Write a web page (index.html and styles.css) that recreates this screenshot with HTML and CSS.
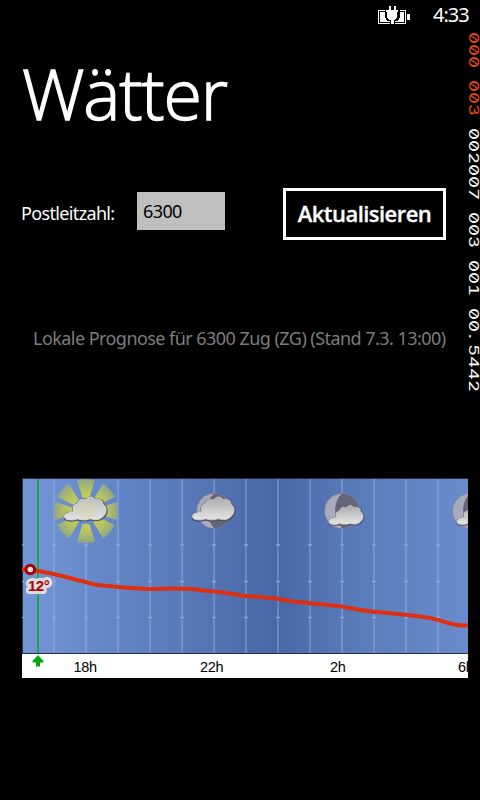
FILE: index.html
```html
<!DOCTYPE html>
<html lang="de">
<head>
<meta charset="utf-8">
<title>Wätter</title>
<link rel="stylesheet" href="styles.css">
</head>
<body>
<div class="phone">
  <header class="status">
    <svg class="battery" width="34" height="20" viewBox="0 0 34 20" shape-rendering="crispEdges">
      <path fill="#fff" d="M0 4H28V18H0z"/>
      <path fill="none" stroke="#000" d="M1.500 16.500V5.500H26.500V16.500z"/>
      <path fill="#fff" d="M29 8h3v6h-3z"/>
      <path fill="#000" d="M7 4h15v7l-2 4h-3v3h-5v-3H9l-2-4z"/>
      <path fill="#fff" d="M11 0h2v4h3V0h2v4h2v2h-1v5l-2 3h-1v4h-3v-4h-2l-2-3V6H8V4h3z"/>
    </svg>
    <span class="clock">4:33</span>
  </header>
  <svg class="counters" width="14" height="370" viewBox="466 30 14 370">
    <g transform="translate(469.300 32) rotate(90) scale(1.4 1)">
      <text class="hot" x="0 8.571 17.143 25.714 34.286 42.857 51.429">000 003</text>
      <text x="68.571 77.143 85.714 94.286 102.857 111.429 120 128.571 137.143 145.714 154.286 162.857 171.429 180 188.571 197.143 205.714 215.500 222.857 231.429 240 248.571">002007 003 001 00.5442</text>
    </g>
  </svg>
  <main>
    <h1>Wätter</h1>
    <form class="search">
      <label for="plz">Postleitzahl:</label>
      <input id="plz" type="text" value="6300">
      <button type="button">Aktualisieren</button>
    </form>
    <p class="caption">Lokale Prognose für 6300 Zug (ZG) (Stand 7.3. 13:00)</p>
    <svg class="chart" width="446" height="200" viewBox="22 478 446 200">
      <defs>
        <linearGradient id="sky" x1="22" x2="468" y1="0" y2="0" gradientUnits="userSpaceOnUse">
          <stop offset="0" stop-color="#7596d6"/><stop offset=".25" stop-color="#6182c2"/>
          <stop offset=".57" stop-color="#4867a6"/><stop offset=".75" stop-color="#5a7bba"/><stop offset="1" stop-color="#6b8ccc"/>
        </linearGradient>
        <linearGradient id="cloudfill" x1="0" x2="0" y1="0" y2="1">
          <stop offset="0" stop-color="#aaa"/><stop offset="1" stop-color="#e6e6e6"/>
        </linearGradient>
        <linearGradient id="dayfill" x1="0" x2="0" y1="0" y2="1">
          <stop offset="0" stop-color="#bcbcb6"/><stop offset="1" stop-color="#e2e2e2"/>
        </linearGradient>
        <radialGradient id="rays" cx="0" cy="0" r="32" gradientUnits="userSpaceOnUse">
          <stop offset=".35" stop-color="#c6d255"/><stop offset=".7" stop-color="#b3c064"/><stop offset="1" stop-color="#91a58a"/>
        </radialGradient>
        <path id="cloud" d="M-17 9C-23 9-23 2-17 2C-15 0-13 1-12 1C-14-4-11-8-8-7C-8-11-3-14 0-11C3-16 8-15 10-12C15-13 19-10 18-7C23-4 22 3 18 6C14 10 9 9 5 8C0 10-5 9-8 8Q-12 10-17 9z"/>
        <g id="moon"><circle r="17.5" fill="#a9a9bc"/><path fill="#65657a" d="M0-17.5A17.5 17.5 0 0 1 0 17.5Q-7 8-7-2Q-6-12 0-17.5"/><circle r="17.5" fill="none" stroke="#777a92" stroke-width=".6"/></g>
      </defs>
      <path fill="#fff" d="M22 478H468V678H22z"/>
      <path fill="url(#sky)" d="M22.500 478H468V654H22z"/>
      <path stroke="#22304d" d="M22 478.500H468M22 653.500H468M22.500 478V654"/>
      <path stroke="#a0b8e8" stroke-opacity=".5" stroke-width="1.500" d="M54 479V653M86 479V653M118 479V653M150 479V653M182 479V653M214 479V653M246 479V653M278 479V653M310 479V653M342 479V653M374 479V653M406 479V653M438 479V653"/>
      <g stroke="#93abda" stroke-opacity=".8" stroke-width="1.500" stroke-dasharray="4 28"><path d="M20 545H468"/><path d="M20 581.500H468"/><path d="M20 617.500H468"/></g>
      <g transform="translate(86 511)">
        <g fill="url(#rays)">
          <path id="ray" d="M-3.500-13L-9-31Q0-33 9-31L3.500-13z"/>
          <use href="#ray" transform="rotate(48)"/><use href="#ray" transform="rotate(132)"/><use href="#ray" transform="rotate(180)"/><use href="#ray" transform="rotate(228)"/><use href="#ray" transform="rotate(312)"/>
          <path d="M12-3L31-9Q33 0 31 9L12 3zM-12-3L-31-9Q-33 0-31 9L-12 3z"/>
        </g>
        <g transform="translate(-.7 0) scale(.97)">
          <use href="#cloud" x=".4" y=".5" fill="#4d5860" stroke="#4d5860" stroke-width="2.500"/>
          <use href="#cloud" fill="url(#dayfill)" stroke="#dadad6"/>
        </g>
        <circle cy="-1" r="9" fill="#d9d5ae" opacity=".45"/>
      </g>
      <g transform="translate(214 511)"><use href="#moon"/><g transform="translate(-.7 0) scale(.97)"><use href="#cloud" x=".4" y=".5" fill="#4a4f60" stroke="#4a4f60" stroke-width="2.500"/><use href="#cloud" fill="url(#cloudfill)" stroke="#c4c4c4"/></g></g>
      <g id="night"><use href="#moon" x="342" y="511"/><g transform="translate(346 517) scale(.8)"><use href="#cloud" x=".4" y=".5" fill="#4a4f60" stroke="#4a4f60" stroke-width="2.500"/><use href="#cloud" fill="url(#cloudfill)" stroke="#ccc"/></g></g>
      <use href="#night" x="128"/>
      <path stroke="#27a14c" stroke-width="2" d="M38 479V653"/>
      <path fill="none" stroke="#de3010" stroke-width="4" d="M22 569.500H30C38 571 50 573 60 575.500C75 579 90 584 98 585C115 587 130 588 148 589C160 589 175 588 192 589C205 591 225 592 245 596C265 597 280 599 290 601C310 604 330 604 350 608C370 613 390 612 430 618C445 621 450 625 462 625.500H468"/>
      <circle cx="30.300" cy="569.500" r="4.300" fill="#e4dede" stroke="#a50000" stroke-width="3"/>
      <text class="temp" x="28" y="591">12°</text>
      <path fill="#00aa0c" d="M38 655L43.500 661V662.500H40V666.500H36V662.500H32.500V661z"/>
      <g class="hours"><text x="73.500" y="672">18h</text><text x="200" y="672">22h</text><text x="330" y="672">2h</text><text x="458" y="672">6h</text></g>
    </svg>
  </main>
</div>
</body>
</html>
```
FILE: styles.css
```css
* { box-sizing: border-box; }
body { margin: 0; background: #000; color: #fff; font-family: "Noto Sans", "Open Sans", sans-serif; }
.phone { position: relative; width: 480px; height: 800px; overflow: hidden; background: #000; }
.status { display: flex; justify-content: flex-end; height: 32px; padding: 6px 11px 0 0; }
.battery { margin-right: 21px; }
.clock { width: 36px; margin-top: -1px; font-size: 20px; line-height: 20px; letter-spacing: -1px; white-space: nowrap; }
.counters { position: absolute; top: 30px; left: 466px; fill: #fff; font: 13.5px Inter, sans-serif; font-feature-settings: "zero", "tnum"; }
.counters text { white-space: pre; }
.counters .hot { fill: #f04a10; }
main { padding: 0 12px 0 22px; }
h1 { margin: 16px 0 0; height: 90px; font-family: "Open Sans", sans-serif; font-size: 70px; line-height: 90px; font-weight: 300; letter-spacing: -1.2px; -webkit-text-stroke: 1.3px #fff; }
.search { display: flex; align-items: center; height: 52px; margin-top: 50px; }
label { width: 116px; margin: -3px 0 0 -1px; font-size: 18px; letter-spacing: -0.65px; white-space: nowrap; }
input { width: 88px; height: 38px; margin-top: -6px; padding: 0 6px; border: 0; border-radius: 0; background: #bfbfbf; color: #000; font: 18px "Noto Sans", sans-serif; letter-spacing: -0.6px; }
button { width: 163px; height: 52px; margin-left: 58px; padding: 0 0 2px; border: 3px solid #fff; background: #000; color: #fff; font: 600 22px "Open Sans", sans-serif; letter-spacing: -0.55px; -webkit-text-stroke: 0.3px #fff; }
.caption { height: 30px; margin: 83px 0 0 11px; color: #7d7d7d; font-size: 18px; line-height: 30px; letter-spacing: -0.55px; white-space: nowrap; }
.chart { display: block; margin-top: 125px; }
.temp { fill: #ae0009; stroke: #dedede; stroke-width: 6px; stroke-linejoin: round; paint-order: stroke; font: bold 15px "Liberation Sans", sans-serif; letter-spacing: -0.5px; }
.hours { fill: #000; font: 14.5px "Liberation Sans", sans-serif; letter-spacing: -0.3px; }
```
